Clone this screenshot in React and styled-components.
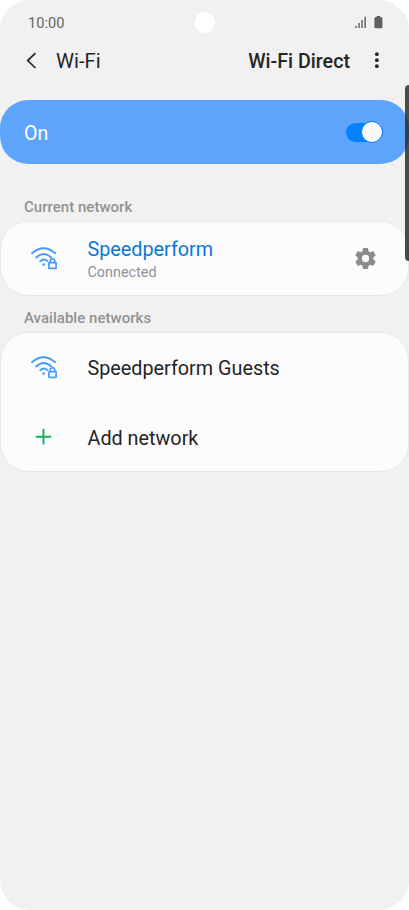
import React from "react";
import styled, { createGlobalStyle } from "styled-components";

const GlobalStyle = createGlobalStyle`
  * { box-sizing: border-box; }
  body { margin: 0; background: #fff; font-family: Roboto, sans-serif; color: #252525; }
`;

const Phone = styled.main`
  position: relative;
  width: 409px;
  height: 910px;
  overflow: hidden;
  border-radius: 30px;
  background: #f1f1f1;
`;

const StatusBar = styled.div`
  display: flex;
  align-items: center;
  justify-content: space-between;
  height: 45px;
  padding: 0 26px 0 28px;
`;

const Clock = styled.span`
  font-size: 14.6px;
  line-height: 18px;
  color: #666;
`;

const StatusIcons = styled.div`
  display: flex;
  gap: 6.5px;
  margin-right: 0.5px;
`;

const Camera = styled.div`
  position: absolute;
  top: 12px;
  left: 194.5px;
  width: 20.5px;
  height: 21px;
  border-radius: 50%;
  background: #fff;
`;

const Header = styled.header`
  display: flex;
  align-items: center;
  height: 32px;
  padding: 0 26px 0 24px;
`;

const IconButton = styled.button`
  display: flex;
  padding: 0;
  border: 0;
  background: none;
`;

const Title = styled.h1`
  flex: 1;
  margin: 0 0 0 16px;
  font-size: 20.3px;
  font-weight: 400;
  line-height: 24px;
`;

const HeaderAction = styled.span`
  margin-right: 20px;
  padding-top: 1px;
  font-size: 19.7px;
  font-weight: 500;
  line-height: 24px;
`;

const PowerBar = styled.section`
  display: flex;
  align-items: center;
  justify-content: space-between;
  height: 64px;
  margin-top: 23px;
  padding: 0 26.5px 0 24px;
  border-radius: 28px;
  background: #5da4fd;
  color: #fff;
  font-size: 19.5px;
`;

const PowerLabel = styled.span`
  padding-top: 2px;
`;

const Track = styled.div`
  display: flex;
  align-items: center;
  justify-content: flex-end;
  width: 36.5px;
  height: 19px;
  border-radius: 10px;
  background: #0681fe;
`;

const Knob = styled.div`
  flex: none;
  width: 22px;
  height: 22px;
  border: 1px solid #0681fe;
  border-radius: 50%;
  background: #fafafa;
`;

const SectionLabel = styled.h2`
  margin: ${(p) => p.$top}px 0 5px 24px;
  font-size: 15px;
  font-weight: 500;
  line-height: 18px;
  letter-spacing: 0.03px;
  color: #929292;
`;

const Card = styled.section`
  border: 1px solid #e8e8e8;
  border-radius: 28px;
  background: #fcfcfc;
`;

const Row = styled.div`
  display: flex;
  align-items: center;
  height: ${(p) => p.$height}px;
  padding: 0 30px 0 29px;
`;

const IconSlot = styled.div`
  display: flex;
  width: 57.5px;
`;

const RowText = styled.div`
  flex: 1;
  padding-top: ${(p) => p.$shift || 0}px;
`;

const Name = styled.div`
  font-size: 19.8px;
  line-height: 24px;
  color: ${(p) => (p.$active ? "#0a78d8" : "#252525")};
`;

const Detail = styled.div`
  margin-top: 2px;
  font-size: 14.4px;
  line-height: 18px;
  color: #929292;
`;

const EdgeHandle = styled.div`
  position: absolute;
  top: 85px;
  right: 0;
  width: 4px;
  height: 176px;
  border-radius: 4px 0 0 4px;
  background: rgba(45, 45, 45, 0.86);
`;

const SignalIcon = () => (
  <svg width="12" height="13" viewBox="0 0 12 13" fill="#777">
    <rect x="0.2" y="9.8" width="1.7" height="2.2" />
    <rect x="3.2" y="7" width="1.7" height="5" />
    <rect x="6.2" y="4" width="1.7" height="8" />
    <rect x="9.3" y="0.8" width="1.7" height="11.2" />
  </svg>
);

const BatteryIcon = () => (
  <svg width="9" height="13" viewBox="0 0 9 13">
    <path d="M2.6 0h3.6v1.2h1.2q1 0 1 1v9q0 1-1 1h-6q-1 0-1-1v-9q0-1 1-1h1.2z" fill="#5f5f5f" />
  </svg>
);

const BackIcon = () => (
  <svg width="16" height="20" viewBox="0 0 16 20" fill="none">
    <path d="M11.4 2.2 3.7 9.6l7.7 7.4" stroke="#252525" strokeWidth="1.7" />
  </svg>
);

const MoreIcon = () => (
  <svg width="13" height="20" viewBox="0 0 13 20" fill="#252525">
    <circle cx="6.9" cy="3.2" r="1.9" />
    <circle cx="6.9" cy="9.2" r="1.9" />
    <circle cx="6.9" cy="15.2" r="1.9" />
  </svg>
);

const SecureWifiIcon = () => (
  <svg width="30" height="26" viewBox="0 0 30 26" fill="none" stroke="#479bff" strokeWidth="1.8" strokeLinecap="round">
    <path d="M2 7.2Q13.5 -2.7 25.2 7.2" />
    <path d="M6.2 11.5Q13.5 4.5 21.4 11.5" />
    <path d="M10.2 15.4Q13.5 11.8 17.4 15" />
    <circle cx="13.6" cy="18.6" r="1.3" fill="#479bff" stroke="none" />
    <rect x="18.9" y="16.7" width="7.2" height="5.7" rx="0.4" strokeWidth="1.7" />
    <path d="M20.2 16.5v-1.5a2.3 2.3 0 0 1 4.6 0v1.5" strokeWidth="1.6" />
  </svg>
);

const PlusIcon = () => (
  <svg width="30" height="26" viewBox="0 0 30 26" fill="none">
    <path d="M13.5 4.9v15.6M5.8 12.7h15.4" stroke="#12b458" strokeWidth="1.9" />
  </svg>
);

const GearIcon = () => (
  <svg width="25" height="25" viewBox="0 0 24 24" fill="#8b8b8b">
    <path d="M19.43 12.98c.04-.32.07-.64.07-.98s-.03-.66-.07-.98l2.11-1.65c.19-.15.24-.42.12-.64l-2-3.46c-.12-.22-.39-.3-.61-.22l-2.49 1c-.52-.4-1.08-.73-1.69-.98l-.38-2.65A.49.49 0 0 0 14 2h-4c-.25 0-.46.18-.49.42l-.38 2.65c-.61.25-1.17.59-1.69.98l-2.49-1c-.23-.09-.49 0-.61.22l-2 3.46c-.13.22-.07.49.12.64l2.11 1.65c-.04.32-.07.65-.07.98s.03.66.07.98l-2.11 1.65c-.19.15-.24.42-.12.64l2 3.46c.12.22.39.3.61.22l2.49-1c.52.4 1.08.73 1.69.98l.38 2.65c.03.24.24.42.49.42h4c.25 0 .46-.18.49-.42l.38-2.65c.61-.25 1.17-.59 1.69-.98l2.49 1c.23.09.49 0 .61-.22l2-3.46c.12-.22.07-.49-.12-.64l-2.11-1.65zM12 15.5a3.5 3.5 0 1 1 0-7 3.5 3.5 0 0 1 0 7z" />
  </svg>
);

export default function App() {
  return (
    <>
      <GlobalStyle />
      <Phone>
        <StatusBar>
          <Clock>10:00</Clock>
          <StatusIcons>
            <SignalIcon />
            <BatteryIcon />
          </StatusIcons>
        </StatusBar>
        <Camera />
        <Header>
          <IconButton aria-label="Back"><BackIcon /></IconButton>
          <Title>Wi-Fi</Title>
          <HeaderAction>Wi-Fi Direct</HeaderAction>
          <IconButton aria-label="More options"><MoreIcon /></IconButton>
        </Header>
        <PowerBar>
          <PowerLabel>On</PowerLabel>
          <Track><Knob /></Track>
        </PowerBar>
        <SectionLabel $top={34}>Current network</SectionLabel>
        <Card>
          <Row $height={73}>
            <IconSlot><SecureWifiIcon /></IconSlot>
            <RowText $shift={3}>
              <Name $active>Speedperform</Name>
              <Detail>Connected</Detail>
            </RowText>
            <IconButton aria-label="Network settings"><GearIcon /></IconButton>
          </Row>
        </Card>
        <SectionLabel $top={13}>Available networks</SectionLabel>
        <Card>
          <Row $height={69}>
            <IconSlot><SecureWifiIcon /></IconSlot>
            <RowText $shift={3}><Name>Speedperform Guests</Name></RowText>
          </Row>
          <Row $height={69}>
            <IconSlot><PlusIcon /></IconSlot>
            <RowText $shift={4}><Name>Add network</Name></RowText>
          </Row>
        </Card>
        <EdgeHandle />
      </Phone>
    </>
  );
}
